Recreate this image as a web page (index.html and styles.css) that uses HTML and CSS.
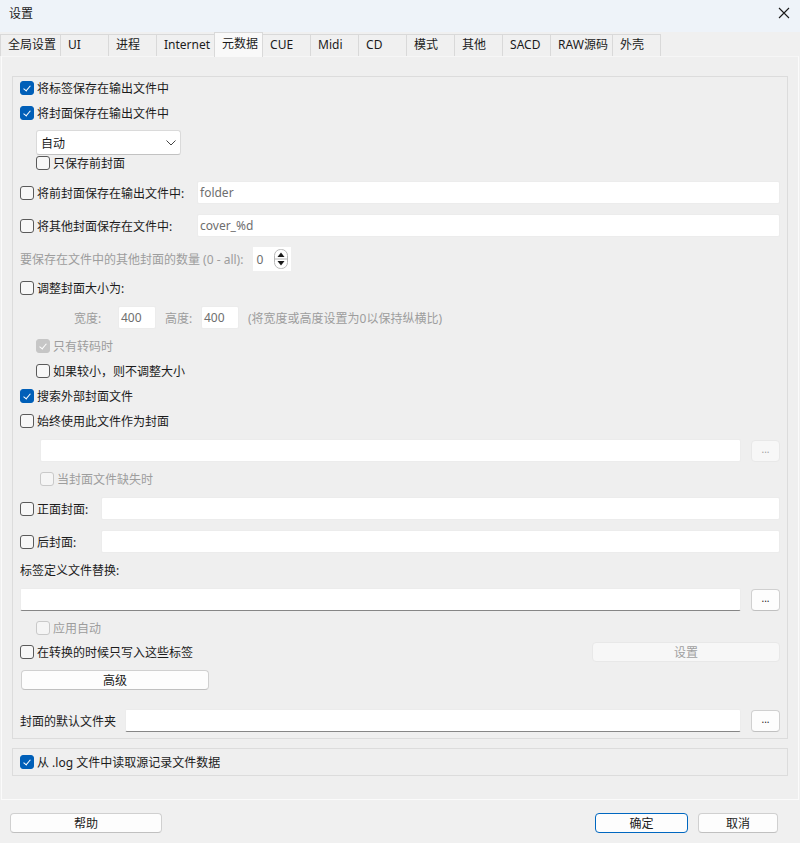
FILE: index.html
```html
<!DOCTYPE html>
<html lang="zh-CN">

<head>
  <meta charset="UTF-8">
  <title>设置</title>
  <link rel="stylesheet" href="styles.css">
</head>

<body>
  <div class="win">
    <div class="titlebar">
      <span class="title">设置</span>
      <svg class="close" width="12" height="12" viewBox="0 0 12 12">
        <path d="M1 1L11 11M11 1L1 11" stroke="#1a1a1a" stroke-width="1.1" fill="none" />
      </svg>
    </div>

    <ul class="tabs">
      <li>全局设置</li>
      <li>UI</li>
      <li>进程</li>
      <li>Internet</li>
      <li class="active">元数据</li>
      <li>CUE</li>
      <li>Midi</li>
      <li>CD</li>
      <li>模式</li>
      <li>其他</li>
      <li>SACD</li>
      <li>RAW源码</li>
      <li>外壳</li>
    </ul>

    <div class="panel">
      <div class="group">
        <label class="row chk first"><span class="cb on"></span>将标签保存在输出文件中</label>
        <label class="row chk"><span class="cb on"></span>将封面保存在输出文件中</label>
        <div class="combo indent">
          <span>自动</span>
          <svg width="10" height="6" viewBox="0 0 10 6">
            <path d="M0.5 0.5L5 5L9.5 0.5" stroke="#444" stroke-width="1" fill="none" />
          </svg>
        </div>
        <label class="row chk indent tight"><span class="cb"></span>只保存前封面</label>

        <div class="row field">
          <label class="lbl w177"><span class="cb"></span>将前封面保存在输出文件中:</label>
          <div class="input grow">folder</div>
        </div>
        <div class="row field">
          <label class="lbl w177"><span class="cb"></span>将其他封面保存在文件中:</label>
          <div class="input grow">cover_%d</div>
        </div>
        <div class="row spinrow">
          <span class="muted">要保存在文件中的其他封面的数量 (0 - all):</span>
          <div class="spin">
            <span>0</span>
            <svg width="14" height="20" viewBox="0 0 14 20">
              <rect x="0.5" y="0.5" width="13" height="19" rx="6" fill="#fff" stroke="#b8b8b8" />
              <path d="M3.5 8L7 3.5L10.5 8Z" fill="#1a1a1a" />
              <path d="M3.5 12L7 16.5L10.5 12Z" fill="#1a1a1a" />
              <path d="M1 10H13" stroke="#b8b8b8" />
            </svg>
          </div>
        </div>
        <label class="row chk"><span class="cb"></span>调整封面大小为:</label>
        <div class="row field sizes">
          <span class="muted wlabel">宽度:</span>
          <div class="input small">400</div>
          <span class="muted hlabel">高度:</span>
          <div class="input small">400</div>
          <span class="muted">(将宽度或高度设置为0以保持纵横比)</span>
        </div>
        <label class="row chk indent off"><span class="cb on"></span>只有转码时</label>
        <label class="row chk indent"><span class="cb"></span>如果较小，则不调整大小</label>
        <label class="row chk"><span class="cb on"></span>搜索外部封面文件</label>
        <label class="row chk"><span class="cb"></span>始终使用此文件作为封面</label>
        <div class="row field indent2">
          <div class="input grow"></div>
          <div class="btn dots disabled">...</div>
        </div>
        <label class="row chk indent2 off"><span class="cb"></span>当封面文件缺失时</label>
        <div class="row field">
          <label class="lbl w81"><span class="cb"></span>正面封面:</label>
          <div class="input grow"></div>
        </div>
        <div class="row field">
          <label class="lbl w81"><span class="cb"></span>后封面:</label>
          <div class="input grow"></div>
        </div>
        <div class="row chk">标签定义文件替换:</div>
        <div class="row field">
          <div class="input grow line"></div>
          <div class="btn dots">...</div>
        </div>
        <label class="row chk indent off"><span class="cb"></span>应用自动</label>
        <div class="row btnrow">
          <label class="lbl grow"><span class="cb"></span>在转换的时候只写入这些标签</label>
          <div class="btn wide disabled">设置</div>
        </div>
        <div class="row btnrow adv">
          <div class="btn wide">高级</div>
        </div>
        <div class="row field folder">
          <span class="lbl w105">封面的默认文件夹</span>
          <div class="input grow line"></div>
          <div class="btn dots">...</div>
        </div>
      </div>

      <div class="group second">
        <label class="row chk"><span class="cb on"></span>从 .log 文件中读取源记录文件数据</label>
      </div>
    </div>

    <div class="footer">
      <div class="btn help">帮助</div>
      <div class="btn ok">确定</div>
      <div class="btn cancel">取消</div>
    </div>
  </div>
</body>

</html>
```

FILE: styles.css
```css
* {
  margin: 0;
  padding: 0;
  box-sizing: border-box;
}

body {
  width: 800px;
  height: 843px;
  background: #f0f0f0;
  font-family: "Noto Sans", "Noto Sans CJK SC", sans-serif;
  font-size: 12px;
  color: #1b1b1b;
  overflow: hidden;
}

.win {
  height: 843px;
  display: flex;
  flex-direction: column;
}

.titlebar {
  height: 32px;
  background: #eef3f9;
  display: flex;
  align-items: center;
  justify-content: space-between;
  padding: 0 10px 0 9px;
}

.title {
  margin-top: -6px;
}

.close {
  margin-top: -6px;
}

.tabs {
  display: flex;
  list-style: none;
  height: 24px;
  align-items: flex-end;
}

.tabs li {
  height: 22px;
  line-height: 20px;
  padding: 0 4px 0 7px;
  min-width: 49px;
  border: 1px solid #d9d9d9;
  border-bottom: none;
  margin-right: -1px;
  background: #f0f0f0;
  white-space: nowrap;
}

.tabs li.active {
  height: 25px;
  line-height: 22px;
  background: #f9f9f9;
  position: relative;
  z-index: 1;
  margin-bottom: -1px;
}

.panel {
  flex: 1;
  margin: 0 1px;
  border: 1px solid #fbfbfb;
  border-top-color: #f6f6f6;
  background: #efefef;
  padding: 19px 10px 0 10px;
}

.group {
  border: 1px solid #dcdcdc;
  padding: 3px 7px 6px 7px;
  display: flex;
  flex-direction: column;
}

.group.second {
  margin-top: 9px;
  padding: 5px 7px 5px 7px;
}

.row {
  display: flex;
  align-items: center;
  margin-top: 9px;
  white-space: nowrap;
}

.row.first,
.group.second .row {
  margin-top: 0;
}

.chk {
  height: 16px;
}

.tight {
  margin-top: 0;
}

.field {
  height: 23px;
  margin-top: 10px;
}

.indent {
  margin-left: 16px;
}

.indent2 {
  margin-left: 20px;
}

.lbl {
  display: flex;
  align-items: center;
  flex: none;
}

.lbl.grow {
  flex: 1;
}

.w177 {
  width: 177px;
}

.w81 {
  width: 81px;
}

.w105 {
  width: 105px;
}

.cb {
  width: 14px;
  height: 14px;
  border: 1px solid #5a5a5a;
  border-radius: 3px;
  background: #f7f7f7;
  margin-right: 3px;
  flex: none;
  position: relative;
}

.cb.on {
  background: #005fb8;
  border-color: #005fb8;
}

.cb.on::after {
  content: "";
  position: absolute;
  left: 4px;
  top: 2px;
  width: 3px;
  height: 6px;
  border: solid #fff;
  border-width: 0 1px 1px 0;
  transform: rotate(40deg);
}

.off {
  color: #9d9d9d;
}

.off .cb {
  border-color: #c9c9c9;
  background: #f5f5f5;
}

.off .cb.on {
  background: #c6c6c6;
  border-color: #c6c6c6;
}

.muted {
  color: #9d9d9d;
}

.combo {
  margin-top: 9px;
  width: 145px;
  height: 25px;
  background: #fff;
  border: 1px solid #dadada;
  border-bottom-color: #c2c2c2;
  border-radius: 3px;
  display: flex;
  align-items: center;
  justify-content: space-between;
  padding: 0 4px 0 4px;
}

.input {
  height: 23px;
  background: #fff;
  border: 1px solid #ececec;
  border-radius: 2px;
  padding: 0 2px;
  display: flex;
  align-items: center;
  color: #6e6e6e;
}

.input.grow {
  flex: 1;
}

.input.line {
  border-bottom: 1px solid #868686;
}

.input.small {
  width: 38px;
  margin-right: 9px;
}

.sizes {
  padding-left: 54px;
}

.wlabel {
  width: 44px;
}

.hlabel {
  width: 36px;
}

.spinrow {
  height: 24px;
  margin-top: 10px;
}

.spin {
  margin-left: 10px;
  width: 38px;
  height: 24px;
  background: #fff;
  display: flex;
  align-items: center;
  justify-content: space-between;
  padding: 0 3px 0 3px;
  color: #6e6e6e;
}

.btn {
  height: 20px;
  background: #fdfdfd;
  border: 1px solid #d0d0d0;
  border-bottom-color: #c0c0c0;
  border-radius: 4px;
  display: flex;
  align-items: center;
  justify-content: center;
  flex: none;
}

.btn.disabled {
  background: #f7f7f7;
  border-color: #e8e8e8;
  color: #a0a0a0;
}

.dots {
  width: 29px;
  height: 22px;
  margin-left: 10px;
  font-size: 10px;
  padding-bottom: 4px;
}

.btnrow {
  height: 20px;
  margin-top: 6px;
}

.btn.wide {
  width: 188px;
}

.adv {
  margin-top: 8px;
  padding-left: 1px;
}

.folder {
  margin-top: 19px;
}

.footer {
  height: 43px;
  display: flex;
  align-items: flex-start;
  padding: 13px 22px 0 10px;
}

.help {
  width: 152px;
}

.ok {
  width: 93px;
  margin-left: auto;
  border-color: #0067c0;
}

.cancel {
  width: 80px;
  margin-left: 10px;
}
```
